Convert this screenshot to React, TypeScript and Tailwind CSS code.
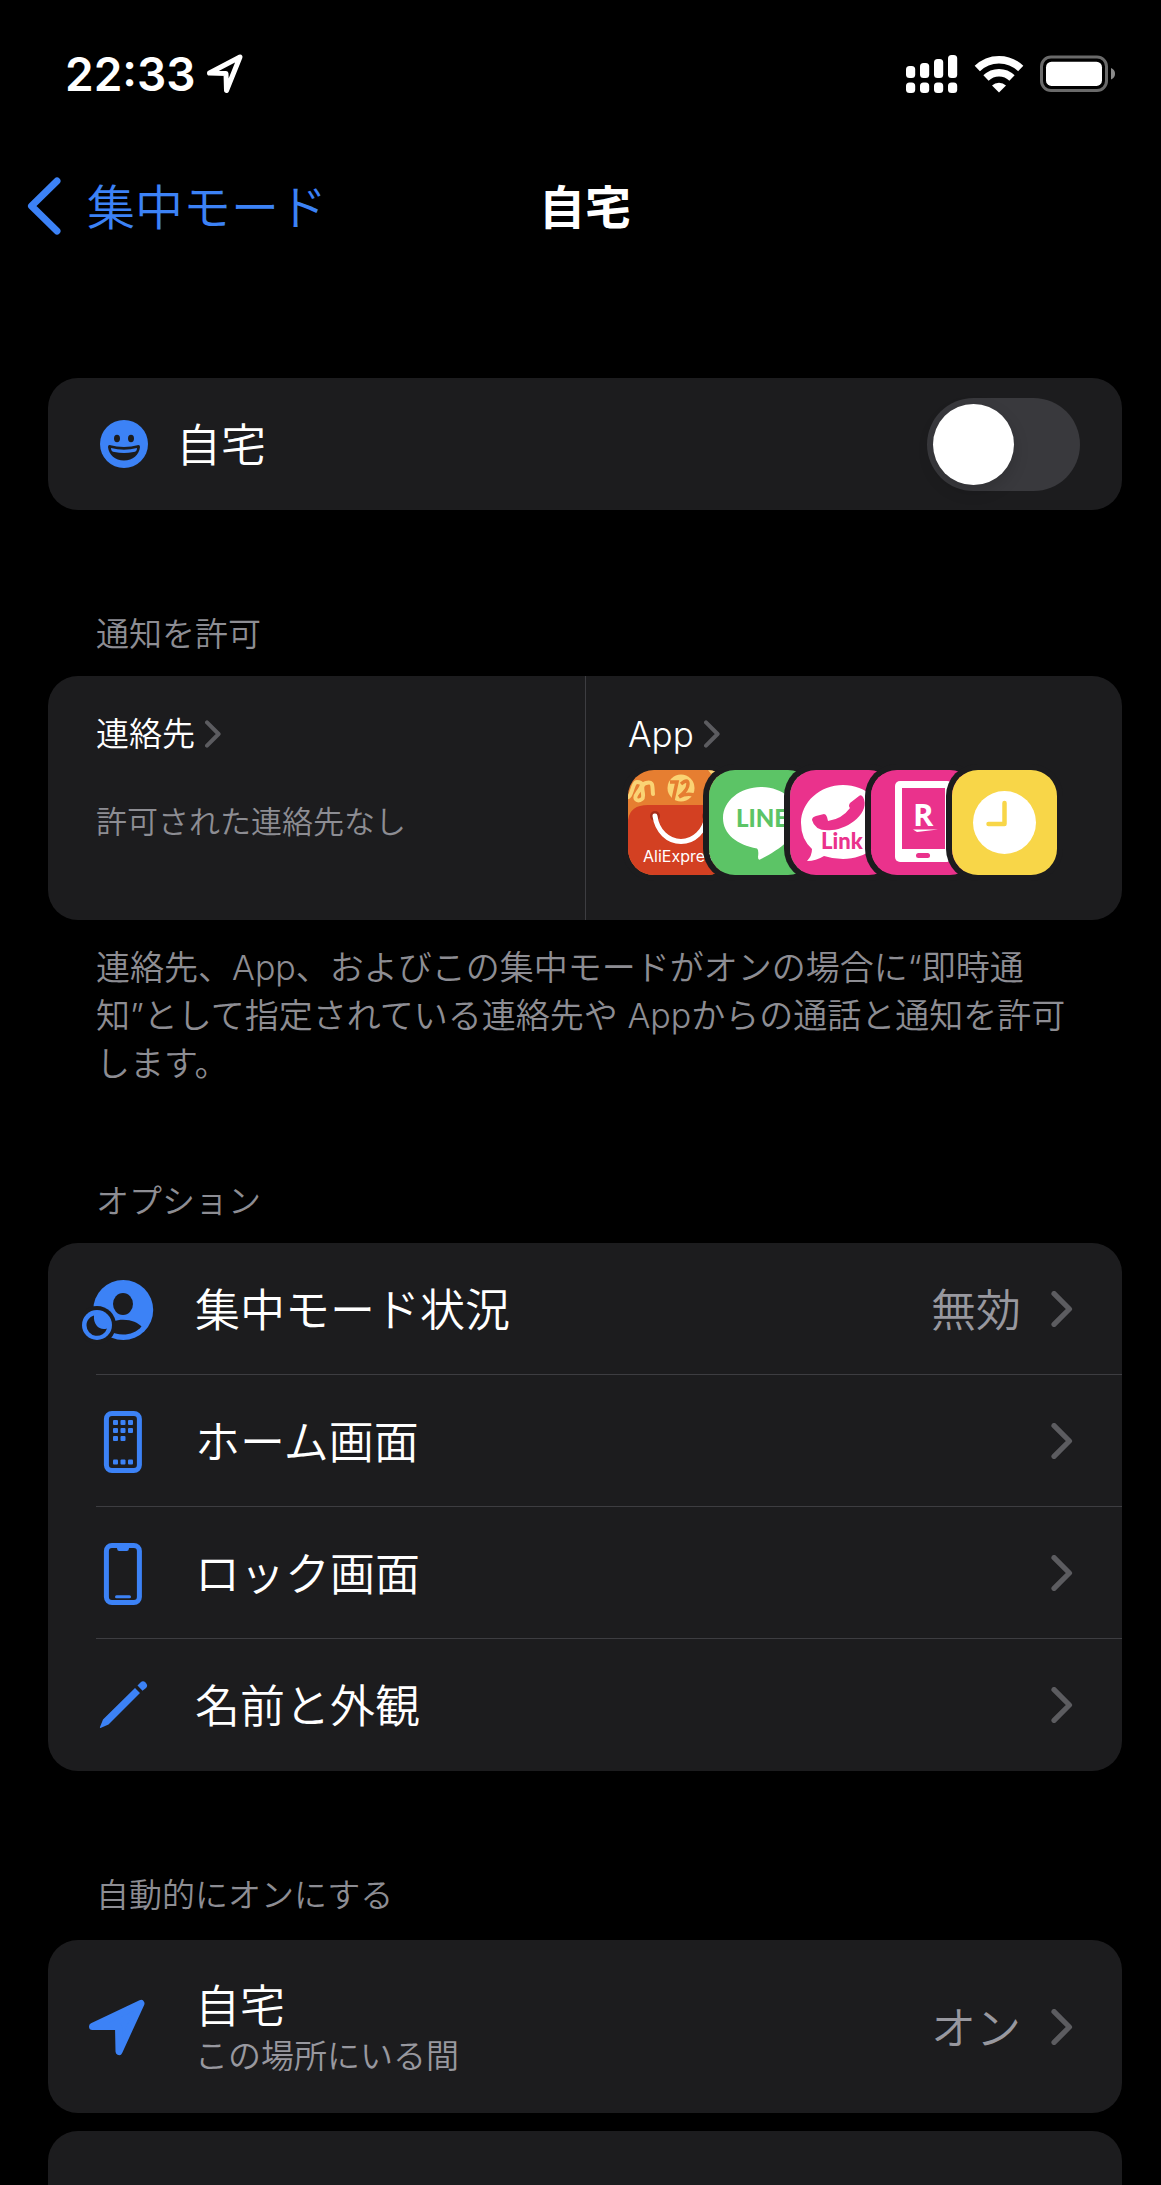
import { useState } from 'react'
import type { ReactNode } from 'react'

const BLUE = '#3c82f6'

function Chevron({ className }: { className: string }) {
  return (
    <svg viewBox="0 0 20 34" fill="none" stroke="#5c5c60" strokeWidth="5" strokeLinecap="round" strokeLinejoin="round" className={className} aria-hidden="true">
      <path d="M2.500 2.500 17 17 2.500 31.500" />
    </svg>
  )
}

function StatusBar() {
  return (
    <div className="flex items-center justify-between pl-[65px] pr-[45px] pt-[48px] h-[100px] text-white">
      <div className="flex items-center gap-[10px]">
        <time className="text-[46px] leading-[52px] font-semibold">22:33</time>
        <svg width="38" height="42" viewBox="0 0 38 42" fill="none" stroke="white" strokeWidth="5" strokeLinejoin="round" aria-label="位置情報">
          <path d="M3.500 20 34 4 20.500 37.500 20 20.500Z" />
        </svg>
      </div>
      <div className="flex items-center">
        <svg width="52" height="42" viewBox="0 0 52 42" fill="white" aria-label="電波">
          <rect x="0" y="13" width="9.200" height="12" rx="3.500" />
          <rect x="14" y="10" width="9.200" height="15" rx="3.500" />
          <rect x="28" y="6" width="9.200" height="19" rx="3.500" />
          <rect x="42" y="2" width="9.200" height="23" rx="3.500" />
          <rect x="0" y="29.500" width="9.200" height="10.500" rx="3.500" />
          <rect x="14" y="29.500" width="9.200" height="10.500" rx="3.500" />
          <rect x="28" y="29.500" width="9.200" height="10.500" rx="3.500" />
          <rect x="42" y="29.500" width="9.200" height="10.500" rx="3.500" />
        </svg>
        <svg width="50" height="38" viewBox="0 0 50 38" className="ml-4" fill="none" stroke="white" strokeWidth="7.500" aria-label="Wi-Fi">
          <path d="M3.300 13.500A31 31 0 0 1 46.700 13.500" />
          <path d="M12 23A18.500 18.500 0 0 1 38 23" />
          <path d="M25 37.500 18 30.500A10 10 0 0 1 32 30.500Z" fill="white" stroke="none" />
        </svg>
        <svg width="76" height="38" viewBox="0 0 76 38" className="ml-4" aria-label="バッテリー">
          <rect x="1.500" y="2" width="65" height="33.500" rx="9.500" fill="none" stroke="#6a6a6a" strokeWidth="3" />
          <rect x="6" y="6.700" width="56" height="24.200" rx="5.500" fill="white" />
          <path d="M71 13Q75 14.500 75 18.800T71 24.500Z" fill="#8a8a8a" />
        </svg>
      </div>
    </div>
  )
}

function SmileIcon() {
  return (
    <svg width="48" height="48" viewBox="0 0 48 48" aria-hidden="true">
      <circle cx="24" cy="24" r="24" fill={BLUE} />
      <g fill="#1c1c1e">
        <ellipse cx="17" cy="18.500" rx="3" ry="3.700" />
        <ellipse cx="31" cy="18.500" rx="3" ry="3.700" />
        <path d="M9.500 25Q24 29 38.500 25Q40 25 40 27C39 35 33 40.500 24 40.500S9 35 8 27Q8 25 9.500 25Z" />
      </g>
      <path d="M11 28Q24 31.500 37 28Q37 32 33.500 32Q24 34 14.500 32Q11 32 11 28Z" fill={BLUE} />
    </svg>
  )
}

function FocusStatusIcon() {
  return (
    <svg width="72" height="72" viewBox="0 0 72 72" aria-hidden="true">
      <circle cx="41.200" cy="37" r="30" fill={BLUE} />
      <ellipse cx="41" cy="31" rx="10" ry="11" fill="#1c1c1e" />
      <path d="M24 55C28 49 34 46.700 41 46.700C50 46.700 56 50 59.500 53.500C55 59 48 61.500 41 61.500C36 61.500 31 60 27 58Z" fill="#1c1c1e" />
      <circle cx="15" cy="52" r="19" fill="#1c1c1e" />
      <circle cx="15" cy="52" r="15" fill={BLUE} />
      <path d="M12 42.500C7 44 4.500 48 4.500 52.500A10.500 10.500 0 0 0 25 55.500C18 58 11 52 12 42.500Z" fill="#1c1c1e" />
    </svg>
  )
}

const DOTS = [
  [31, 17], [38.5, 17], [46, 17],
  [31, 25], [38.5, 25], [46, 25],
  [31, 33], [38.5, 33],
  [31, 56.5], [38.5, 56.5], [46, 56.5],
]

function HomeScreenIcon() {
  return (
    <svg width="72" height="72" viewBox="0 0 72 72" aria-hidden="true">
      <rect x="24.400" y="8.500" width="33" height="57" rx="5.500" fill="none" stroke={BLUE} strokeWidth="5" />
      {DOTS.map(([x, y]) => (
        <rect key={`${x}-${y}`} x={x} y={y - 2} width="5" height="5" rx="1" fill={BLUE} />
      ))}
    </svg>
  )
}

function LockScreenIcon() {
  return (
    <svg width="72" height="72" viewBox="0 0 72 72" aria-hidden="true">
      <rect x="24.400" y="8.500" width="33" height="57" rx="5.500" fill="none" stroke={BLUE} strokeWidth="5" />
      <path d="M34 10H48Q46.800 11 46.800 12Q46.800 14 44.800 14H37.200Q35.200 14 35.200 12Q35.200 11 34 10Z" fill={BLUE} />
      <path d="M34.500 59.700H47.500" stroke={BLUE} strokeWidth="3" strokeLinecap="round" />
    </svg>
  )
}

function PencilIcon() {
  return (
    <svg width="72" height="72" viewBox="0 0 72 72" fill={BLUE} aria-hidden="true">
      <path d="M53 19 58 24 26.500 55.500 18.500 59Q17.500 59 18 58L21 50.500Z" />
      <path d="M55.500 16.500 58.500 13.500Q61 11 63.500 13.500Q66.500 16.500 64 19L60.500 21.800Z" />
    </svg>
  )
}

function LocationIcon() {
  return (
    <svg width="72" height="72" viewBox="0 0 72 72" fill={BLUE} stroke={BLUE} strokeWidth="7" strokeLinejoin="round" aria-hidden="true">
      <path d="M10.500 35.500 59 12.500 37 60.500 36.500 35.500Z" />
    </svg>
  )
}

function SectionTitle({ children }: { children: ReactNode }) {
  return <h2 className="pl-12 pt-px text-[33px] leading-[44px] text-[#8d8d93]">{children}</h2>
}

interface RowProps { icon: ReactNode; label: string; sub?: string; value?: string }

function Row({ icon, label, sub, value }: RowProps) {
  return (
    <button type="button" className="w-full flex items-center pl-[34px] pr-[49px] text-left">
      {icon}
      <span className={sub ? 'ml-[41px] flex-1 flex flex-col pt-2' : 'ml-[41px] flex-1 flex flex-col pt-1'}>
        <span className="text-[45px] leading-[50px] text-white">{label}</span>
        {sub && <span className="text-[33px] leading-[48px] text-[#98989f]">{sub}</span>}
      </span>
      {value && <span className="pt-1 text-[45px] leading-[50px] text-[#98989f]">{value}</span>}
      <Chevron className="ml-[30px] w-[22px] h-[36px]" />
    </button>
  )
}

const OPTIONS = [
  { label: '集中モード状況', value: '無効', icon: <FocusStatusIcon /> },
  { label: 'ホーム画面', icon: <HomeScreenIcon /> },
  { label: 'ロック画面', icon: <LockScreenIcon /> },
  { label: '名前と外観', icon: <PencilIcon /> },
]

function AppTile({ children, bg }: { children: ReactNode; bg: string }) {
  return (
    <svg viewBox="0 0 105 105" className="size-[105px] rounded-[26px] ring-6 ring-[#1c1c1e] shrink-0" aria-hidden="true">
      <rect width="105" height="105" fill={bg} />
      {children}
    </svg>
  )
}

function AllowedApps() {
  return (
    <div className="flex -space-x-6">
      <AppTile bg="#e67e31">
        <path d="M-2 27C4 30 4 12 9 12S16 14 10 22S10 32 14 29S10 15 18 13S24 16 25 24" fill="none" stroke="#fad374" strokeWidth="4" strokeLinecap="round" />
        <circle cx="53" cy="18" r="13.500" fill="#fad374" />
        <path d="M42 12H49L45 30M53 14Q60 8 60 14T51 27Q58 23 66 25" fill="none" stroke="#e67e31" strokeWidth="3.500" />
        <path d="M80 0H90L84 5Z" fill="#fad374" />
        <path d="M0 50Q2 35 20 35H105V105H0Z" fill="#d34022" />
        <circle cx="27" cy="46" r="5" fill="#a82c18" />
        <circle cx="79" cy="46" r="5" fill="#a82c18" />
        <path d="M27 46C29 61 40 71.500 53 71.500S77 61 79 46" fill="none" stroke="white" strokeWidth="5" strokeLinecap="round" />
        <text x="15" y="92" fontSize="16" fontWeight="400" fill="white">AliExpress</text>
      </AppTile>
      <AppTile bg="#5cc466">
        <path d="M52 17C31 17 14 31 14 48C14 64 28 75 48 78.500Q50 80 49 87Q49 91 52 89C70 80 90 66 90 48C90 31 73 17 52 17Z" fill="white" />
        <text x="27" y="57" fontSize="24" fontWeight="900" fontFamily="Lato, sans-serif" fill="#5cc466">LINE</text>
      </AppTile>
      <AppTile bg="#ea328c">
        <path d="M53 15C30 15 11 32 11 53Q11 69 22 79Q22 86 17 91Q26 91 34 86Q43 89 53 89C76 89 95 74 95 53S76 15 53 15Z" fill="white" />
        <path d="M22 50Q22 47 26 46L34 44Q36 44 37 47L38 51Q52 49 60 38Q58 36 60 33L69 26Q71 24 73 27C81 42 59 59 42 60Q25 62 22 50Z" fill="#ea328c" />
        <text x="31" y="79" fontSize="22" fontWeight="900" fontFamily="Lato, sans-serif" fill="#ea328c">Link</text>
      </AppTile>
      <AppTile bg="#ea328c">
        <rect x="24" y="11" width="57" height="81" rx="5" fill="white" />
        <rect x="31" y="18" width="43" height="61" fill="#ea328c" />
        <rect x="45" y="83" width="14" height="5" rx="2.500" fill="#ea328c" />
        <text x="42" y="56" fontSize="31" fontWeight="700" fill="white" fontFamily="Open Sans, sans-serif">R</text>
        <path d="M42 59.500H67L46 62Z" fill="white" />
      </AppTile>
      <AppTile bg="#f8d648">
        <circle cx="52.500" cy="52.500" r="31.500" fill="white" />
        <path d="M52.500 33V54H36.500" fill="none" stroke="#f8d648" strokeWidth="4.500" strokeLinecap="round" strokeLinejoin="round" />
      </AppTile>
    </div>
  )
}

export default function App() {
  const [enabled, setEnabled] = useState(false)

  return (
    <div lang="ja" className="min-h-screen bg-black font-['Inter','Noto_Sans_CJK_JP',sans-serif] font-[350]">
      <StatusBar />

      <header className="grid grid-cols-[1fr_auto_1fr] items-center pl-[27px] pr-[18px] mt-[70px] h-[72px]">
        <a href="#focus" className="flex items-center gap-[26px] text-[48px] leading-[64px] text-[#3c82f6]">
          <svg width="34" height="58" viewBox="0 0 34 58" fill="none" stroke="currentColor" strokeWidth="7" strokeLinecap="round" strokeLinejoin="round" aria-hidden="true">
            <path d="M30 4 4.500 29 30 54" />
          </svg>
          <span className="pt-1">集中モード</span>
        </a>
        <h1 className="pt-[2px] text-[46px] leading-[64px] font-bold text-white">自宅</h1>
      </header>

      <main className="pl-12 pr-[39px] pt-[136px]">
        <label className="flex items-center h-[132px] rounded-[30px] bg-[#1c1c1e] pl-[52px] pr-[42px]">
          <SmileIcon />
          <span className="ml-7 flex-1 pt-1 text-[45px] leading-[50px] text-white">自宅</span>
          <input type="checkbox" role="switch" checked={enabled} onChange={e => setEnabled(e.target.checked)} className="peer sr-only" />
          <span className="w-[153px] h-[93px] p-[6px] rounded-full bg-[#39393d] flex peer-checked:justify-end peer-checked:bg-[#30d158]">
            <span className="size-[81px] rounded-full bg-white shadow-[0_6px_16px_rgba(0,0,0,0.15)]" />
          </span>
        </label>

        <section className="mt-[101px]">
          <SectionTitle>通知を許可</SectionTitle>
          <div className="mt-5 h-[244px] grid grid-cols-2 rounded-[30px] bg-[#1c1c1e]">
            <div className="pl-12 pt-9">
              <button type="button" className="flex items-center gap-[10px] text-[33px] leading-[44px] text-white">
                連絡先
                <Chevron className="w-[16px] h-[28px]" />
              </button>
              <p className="mt-11 text-[31px] leading-[44px] text-[#8d8d93]">許可された連絡先なし</p>
            </div>
            <div className="pl-[42px] pt-9 border-l border-[#3d3d41]">
              <button type="button" className="flex items-center gap-[10px] text-[35px] leading-[44px] text-white">
                App
                <Chevron className="w-[16px] h-[28px]" />
              </button>
              <div className="mt-[14px]"><AllowedApps /></div>
            </div>
          </div>
          <p className="mt-6 px-12 text-[34px] leading-[48px] text-[#8d8d93]">
            連絡先、App、およびこの集中モードがオンの場合に“即時通知”として指定されている連絡先や Appからの通話と通知を許可します。
          </p>
        </section>

        <section className="mt-[90px]">
          <SectionTitle>オプション</SectionTitle>
          <ul className="mt-5 rounded-[30px] bg-[#1c1c1e]">
            {OPTIONS.map((o, i) => (
              <li key={o.label}>
                {i > 0 && <div className="ml-12 h-px -mt-px bg-[#3d3d41]" />}
                <div className="h-[132px] flex items-center"><Row {...o} /></div>
              </li>
            ))}
          </ul>
        </section>

        <section className="mt-[101px]">
          <SectionTitle>自動的にオンにする</SectionTitle>
          <div className="mt-[23px] h-[173px] flex items-center rounded-[30px] bg-[#1c1c1e]">
            <Row icon={<LocationIcon />} label="自宅" sub="この場所にいる間" value="オン" />
          </div>
          <div className="mt-[18px] h-[54px] rounded-t-[30px] bg-[#1c1c1e]" />
        </section>
      </main>
    </div>
  )
}
